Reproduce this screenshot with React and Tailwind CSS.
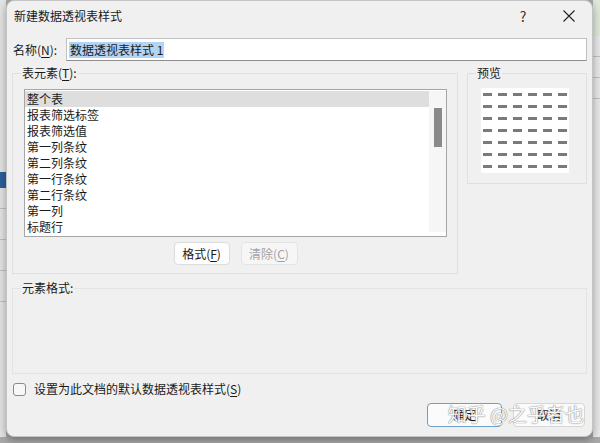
import React from "react";

const items = ["整个表", "报表筛选标签", "报表筛选值", "第一列条纹", "第二列条纹", "第一行条纹", "第二行条纹", "第一列", "标题行"];

function U({ children }) {
  return <span className="underline underline-offset-2">{children}</span>;
}

function Preview() {
  const rows = [0, 1, 2, 3, 4, 5, 6];
  const cols = [0, 1, 2, 3, 4, 5];
  return (
    <div className="w-[88px] h-[85px] bg-white flex flex-col justify-between py-[5px] px-[2px]">
      {rows.map((r) => (
        <div key={r} className="flex justify-between">
          {cols.map((c) => (
            <div key={c} className="w-[9px] h-[3px] bg-[#7a7a7a]" />
          ))}
        </div>
      ))}
    </div>
  );
}

export default function App() {
  const font = "font-['Noto_Sans_CJK_SC','Noto_Sans',sans-serif]";

  return (
    <div className={`w-[600px] h-[443px] bg-[#a9a9a9] flex overflow-hidden ${font} text-[12px] text-[#1a1a1a]`}>
      {/* excel behind */}
      <div className="w-[6px] h-[437px] bg-[#e4e4e4] flex flex-col">
        <div className="mt-[172px] h-[16px] bg-[#2f5f9e]" />
        <div className="mt-[20px] h-px bg-[#c0c0c0]" />
        <div className="mt-[30px] h-px bg-[#c0c0c0]" />
        <div className="mt-[30px] h-px bg-[#c0c0c0]" />
        <div className="mt-[30px] h-px bg-[#c0c0c0]" />
      </div>

      {/* dialog */}
      <div className="relative w-[587px] h-[437px] bg-[#f0f0f0] rounded-lg border border-[#c4c4c4] shadow-[0_3px_8px_rgba(0,0,0,0.35)] flex flex-col px-[5px] pb-[9px]">
        {/* title bar */}
        <div className="h-[30px] flex items-center -mx-[5px]">
          <span className="pl-[7px] leading-4">新建数据透视表样式</span>
          <div className="ml-auto w-[46px] flex justify-center text-[14px] leading-4 text-[#333]">?</div>
          <div className="w-[46px] flex justify-center">
            <svg width="12" height="12" viewBox="0 0 12 12">
              <path d="M0.5 0.5 L11.5 11.5 M11.5 0.5 L0.5 11.5" stroke="#222" strokeWidth="1.1" />
            </svg>
          </div>
        </div>

        {/* name */}
        <div className="mt-[7px] flex items-center h-[23px]">
          <span className="w-[54px] pl-px leading-4">名称(<U>N</U>):</span>
          <div className="flex-1 h-[23px] bg-white border border-[#c2c2c2] border-b-[#8f8f8f] flex items-center pl-[2px]">
            <span className="bg-[#b3d4f2] leading-4 px-px">数据透视表样式 1</span>
          </div>
        </div>

        {/* main */}
        <div className="mt-[4px] flex gap-[9px]">
          <fieldset className="w-[446px] border border-[#e0e0e0] pl-[11px] pr-[10px] pt-[8px] pb-[8px]">
            <legend className="leading-4 -ml-[3px] px-px">表元素(<U>T</U>):</legend>
            <div className="h-[148px] bg-white border border-[#a6a6a6] flex py-px">
              <div className="flex-1 flex flex-col">
                {items.map((t, i) => (
                  <div key={t} className={`h-4 leading-4 pl-[2px] ${i === 0 ? "bg-[#dedede]" : ""}`}>
                    {t}
                  </div>
                ))}
              </div>
              <div className="w-[17px] bg-[#f6f6f6] flex justify-center pt-[17px] mb-[3px]">
                <div className="w-[8px] h-[39px] bg-[#8a8a8a]" />
              </div>
            </div>
            <div className="mt-[5px] flex justify-center gap-[11px]">
              <button className="w-[56px] h-[23px] bg-[#fdfdfd] border border-[#dcdcdc] rounded-[4px] leading-4">
                格式(<U>F</U>)
              </button>
              <button disabled className="w-[57px] h-[23px] bg-[#f6f6f6] border border-[#e4e4e4] rounded-[4px] leading-4 text-[#a3a3a3]">
                清除(<U>C</U>)
              </button>
            </div>
          </fieldset>

          <div className="w-[120px] flex flex-col">
            <fieldset className="border border-[#e0e0e0] pl-[13px] pt-[7px] pb-[10px]">
              <legend className="leading-4 -ml-[5px] px-px">预览</legend>
              <Preview />
            </fieldset>
          </div>
        </div>

        {/* element format */}
        <fieldset className="mt-[6px] h-[94px] border border-[#e3e3e3] pl-[8px]">
          <legend className="leading-4 px-px">元素格式:</legend>
        </fieldset>

        {/* checkbox */}
        <div className="mt-[7px] h-4 flex items-center">
          <div className="ml-px w-[13px] h-[13px] rounded-[3px] border border-[#8a8a8a] bg-[#f7f7f7]" />
          <span className="ml-[8px] leading-4">设置为此文档的默认数据透视表样式(<U>S</U>)</span>
        </div>

        {/* buttons */}
        <div className="mt-[6px] flex justify-end gap-[11px] pr-[2px]">
          <button className="w-[75px] h-[24px] bg-[#fbfbfb] border border-[#6f9fc4] rounded-[4px] leading-4">确定</button>
          <button className="w-[72px] h-[24px] bg-[#fbfbfb] border border-[#d6d6d6] rounded-[4px] leading-4">取消</button>
        </div>

        {/* watermark */}
        <div className="absolute right-[8px] bottom-[10px] text-[19px] leading-6 text-[#fafafa] opacity-90 [text-shadow:0_0_1px_#777,0_0_1px_#777] pointer-events-none">
          知乎 @之乎者也
        </div>
      </div>

      <div className="flex-1 h-[437px] bg-[#e8e8e8] flex flex-col">
        <div className="h-[36px] bg-[#dfe8d8]" />
        <div className="mt-[20px] h-px bg-[#c0c0c0]" />
        <div className="mt-[20px] h-px bg-[#c0c0c0]" />
        <div className="mt-[20px] h-px bg-[#c0c0c0]" />
      </div>
    </div>
  );
}
